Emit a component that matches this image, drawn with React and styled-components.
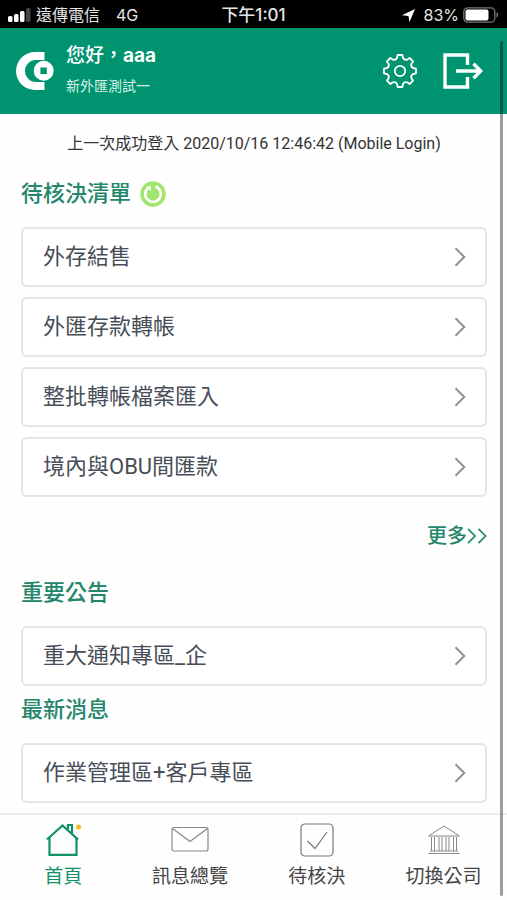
import React, { useState } from "react";
import styled, { createGlobalStyle } from "styled-components";

const approvals = ["外存結售", "外匯存款轉帳", "整批轉帳檔案匯入", "境內與OBU間匯款"];
const notices = ["重大通知專區_企"];
const news = ["作業管理區+客戶專區"];

const tabs = [
  { id: "home", label: "首頁", Icon: HomeIcon },
  { id: "message", label: "訊息總覽", Icon: MailIcon },
  { id: "approve", label: "待核決", Icon: CheckIcon },
  { id: "company", label: "切換公司", Icon: BankIcon },
];

export default function App() {
  // 目前選到的頁籤
  const [tab, setTab] = useState("home");

  return (
    <>
      <GlobalStyle />
      <Page>
        <StatusBar>
          <StatusSide>
            <SignalIcon />
            <Carrier>遠傳電信</Carrier>
            <span>4G</span>
          </StatusSide>
          <Clock>下午1:01</Clock>
          <StatusSide $end>
            <LocationIcon />
            <Percent>83%</Percent>
            <BatteryIcon />
          </StatusSide>
        </StatusBar>

        <Header>
          <LogoIcon />
          <UserInfo>
            <Hello>
              您好，<b>aaa</b>
            </Hello>
            <Company>新外匯測試一</Company>
          </UserInfo>
          <IconButton type="button" aria-label="設定">
            <GearIcon />
          </IconButton>
          <IconButton type="button" aria-label="登出">
            <LogoutIcon />
          </IconButton>
        </Header>

        <Main>
          <LastLogin>上一次成功登入 2020/10/16 12:46:42 (Mobile Login)</LastLogin>

          <TitleRow $top={22}>
            <Title>待核決清單</Title>
            <RefreshButton type="button" aria-label="重新整理">
              <RefreshIcon />
            </RefreshButton>
          </TitleRow>
          <CardList items={approvals} />
          <MoreLink href="#more">
            更多
            <MoreIcon />
          </MoreLink>

          <TitleRow $top={25}>
            <Title>重要公告</Title>
          </TitleRow>
          <CardList items={notices} />

          <TitleRow $top={8}>
            <Title>最新消息</Title>
          </TitleRow>
          <CardList items={news} />
        </Main>

        <TabBar>
          {tabs.map(({ id, label, Icon }) => (
            <TabButton
              key={id}
              type="button"
              $active={tab === id}
              onClick={() => setTab(id)}
            >
              <Icon />
              {label}
            </TabButton>
          ))}
        </TabBar>
        <ScrollThumb />
      </Page>
    </>
  );
}

function CardList({ items }) {
  return (
    <List>
      {items.map((item) => (
        <li key={item}>
          <Card href="#detail">
            {item}
            <ArrowIcon />
          </Card>
        </li>
      ))}
    </List>
  );
}

function SignalIcon() {
  return (
    <svg width="23" height="14" viewBox="0 0 23 14" fill="#fff">
      <rect x="0" y="8" width="4.5" height="6" rx="1.5" />
      <rect x="6" y="6" width="4.5" height="8" rx="1.5" />
      <rect x="12" y="3" width="4.5" height="11" rx="1.5" />
      <rect x="18" y="0" width="4.5" height="14" rx="1.5" fill="#444" />
    </svg>
  );
}

function LocationIcon() {
  return (
    <svg width="13" height="13" viewBox="0 0 13 13" fill="#fff">
      <path d="M13 0 7.5 13 6.5 7 0 6.2Z" />
    </svg>
  );
}

function BatteryIcon() {
  return (
    <svg width="36" height="16" viewBox="0 0 36 16" fill="none">
      <rect x="0.8" y="0.8" width="31" height="14.4" rx="4" stroke="#777" strokeWidth="1.3" />
      <rect x="2.5" y="2.5" width="23" height="11" rx="2" fill="#fff" />
      <path d="M33.5 5.3c2.2.9 2.2 4.5 0 5.4Z" fill="#777" />
    </svg>
  );
}

function LogoIcon() {
  return (
    <svg width="38" height="38" viewBox="0 0 38 38">
      <path
        d="M28.5 0H19a19 19 0 0 0 0 38h9.5V30H20a11 11 0 0 1 0-22h8.5Z"
        fill="#fff"
      />
      <path
        d="M27.7 8.7a10 10 0 1 1 0 20 10 10 0 0 1 0-20ZM24.4 15.5v6.4h6.4v-6.4Z"
        fill="#fff"
        fillRule="evenodd"
      />
    </svg>
  );
}

// 齒輪外框，八個齒每 45 度一個
const gearPath = Array.from({ length: 8 }, (_, i) => {
  const angle = (i * Math.PI) / 4;
  const at = (x, y) => {
    const px = 17 + x * Math.cos(angle) - y * Math.sin(angle);
    const py = 17 + x * Math.sin(angle) + y * Math.cos(angle);
    return `${px.toFixed(2)} ${py.toFixed(2)}`;
  };
  return `${i ? "L" : "M"}${at(-3, -13)}L${at(-2.4, -16)}L${at(2.4, -16)}L${at(3, -13)}Q${at(4.4, -10.6)} ${at(7.1, -11.3)}`;
}).join("");

function GearIcon() {
  return (
    <svg width="34" height="34" viewBox="0 0 34 34" fill="none" stroke="#fff" strokeWidth="1.8" strokeLinejoin="round">
      <path d={`${gearPath}Z`} />
      <circle cx="17" cy="17" r="5.2" />
    </svg>
  );
}

function LogoutIcon() {
  return (
    <svg width="40" height="36" viewBox="0 0 40 36" fill="none" stroke="#fff" strokeWidth="3.4">
      <path d="M24.5 12V2H2v32h22.5V24" />
      <path d="M13 18h24M30.5 10.8l7.2 7.2-7.2 7.2" />
    </svg>
  );
}

function RefreshIcon() {
  return (
    <svg width="26" height="26" viewBox="0 0 26 26" fill="none">
      <circle cx="13" cy="13" r="12.7" fill="#a0e56f" />
      <path d="M15.5 5.6A7.8 7.8 0 1 1 8 7" stroke="#fff" strokeWidth="2.6" />
      <path d="M6 5.2h5v5Z" fill="#fff" />
    </svg>
  );
}

function ArrowIcon() {
  return (
    <svg width="12" height="20" viewBox="0 0 12 20" fill="none" stroke="#909294" strokeWidth="2">
      <path d="M1.5 1.2 10.3 10l-8.8 8.8" />
    </svg>
  );
}

function MoreIcon() {
  return (
    <svg width="20" height="16" viewBox="0 0 20 16" fill="none" stroke="#24866a" strokeWidth="1.7">
      <path d="m1 .8 7 7.2-7 7.2M11.5.8l7 7.2-7 7.2" />
    </svg>
  );
}

function HomeIcon() {
  return (
    <svg width="36" height="34" viewBox="0 0 36 34" fill="none" stroke="#109168" strokeWidth="2.2">
      <path d="M2 16.5 17.5 2.4 33 16.5" />
      <path d="M4.5 14.5v17.3h27V14.5M23 6.5V2h4v8.5" />
      <circle cx="33.5" cy="4" r="2.5" fill="#f5b921" stroke="none" />
    </svg>
  );
}

function MailIcon() {
  return (
    <svg width="38" height="34" viewBox="0 0 38 34" fill="none" stroke="#888" strokeWidth="1.2">
      <rect x="1" y="4.5" width="36" height="23.5" rx="2" />
      <path d="m1.5 5.5 17.5 13 17.5-13" />
    </svg>
  );
}

function CheckIcon() {
  return (
    <svg width="34" height="34" viewBox="0 0 34 34" fill="none" stroke="#777" strokeWidth="1.2">
      <rect x="1" y="1" width="32" height="32" rx="4" />
      <path d="m7.5 18 7.5 7.5L27 9" />
    </svg>
  );
}

function BankIcon() {
  return (
    <svg width="34" height="34" viewBox="0 0 34 34" fill="none" stroke="#888" strokeWidth="1">
      <path d="M1.5 13 17 3l15.5 10ZM3 28h28M1.5 30.5h31" />
      <path d="M4.5 14v14M7.5 14v14M12 14v14M15 14v14M19 14v14M22 14v14M26.5 14v14M29.5 14v14" />
    </svg>
  );
}

const GlobalStyle = createGlobalStyle`
  * {
    box-sizing: border-box;
  }
  body {
    margin: 0;
    background: #fefefe;
    font-family: Roboto, "Noto Sans CJK TC", sans-serif;
  }
  button {
    font-family: inherit;
    border: none;
    background: none;
    padding: 0;
    cursor: pointer;
  }
  a {
    text-decoration: none;
  }
  svg {
    display: block;
    flex: none;
  }
`;

const Page = styled.div`
  position: relative;
  min-height: 100vh;
  display: flex;
  flex-direction: column;
`;

const StatusBar = styled.div`
  height: 28px;
  padding: 2px 8px 0;
  display: grid;
  grid-template-columns: 1fr auto 1fr;
  align-items: center;
  background: #000;
  color: #e4e4e4;
  font-family: Inter, "Noto Sans CJK TC", sans-serif;
  font-size: 16px;
  line-height: 24px;
`;

const StatusSide = styled.div`
  display: flex;
  align-items: center;
  justify-content: ${(props) => (props.$end ? "flex-end" : "flex-start")};
`;

const Carrier = styled.span`
  margin: 0 16px 0 5px;
`;

const Clock = styled.span`
  font-size: 17px;
  font-weight: 500;
`;

const Percent = styled.span`
  margin: 0 4px 0 9px;
`;

const Header = styled.header`
  height: 86px;
  padding: 0 24px 0 16px;
  display: flex;
  align-items: center;
  background: #00936f;
  color: #fff;
`;

const UserInfo = styled.div`
  flex: 1;
  margin: 0 0 4px 12px;
`;

const Hello = styled.div`
  font-size: 19px;
  font-weight: 500;
  line-height: 28px;
  b {
    font-family: Inter, sans-serif;
    font-weight: 700;
  }
`;

const Company = styled.div`
  margin-top: 6px;
  font-size: 14px;
  line-height: 20px;
  color: #d5f0e8;
`;

const IconButton = styled.button`
  margin-left: 26px;
`;

const Main = styled.main`
  flex: 1;
  padding: 18px 20px 10px 21px;
`;

const LastLogin = styled.p`
  margin: 0;
  font-size: 16px;
  line-height: 24px;
  text-align: center;
  color: #333;
`;

const TitleRow = styled.div`
  display: flex;
  align-items: center;
  gap: 9px;
  margin-top: ${(props) => props.$top}px;
`;

const Title = styled.h2`
  margin: 0;
  font-size: 22px;
  font-weight: 500;
  line-height: 32px;
  color: #24866a;
`;

const RefreshButton = styled.button``;

const List = styled.ul`
  margin: 17px 0 0;
  padding: 0;
  display: flex;
  flex-direction: column;
  gap: 10px;
  list-style: none;
`;

const Card = styled.a`
  height: 60px;
  padding: 0 19px 0 20px;
  display: flex;
  align-items: center;
  justify-content: space-between;
  border: 2px solid #e4e5e6;
  border-radius: 6px;
  background: #fff;
  color: #474e57;
  font-size: 22px;
  line-height: 32px;
`;

const MoreLink = styled.a`
  width: fit-content;
  margin: 23px 0 0 auto;
  display: flex;
  align-items: center;
  font-size: 20px;
  font-weight: 500;
  line-height: 32px;
  color: #24866a;
`;

const TabBar = styled.nav`
  position: sticky;
  bottom: 0;
  height: 88px;
  display: grid;
  grid-template-columns: repeat(4, 1fr);
  border-top: 2px solid #eceeef;
  background: #fefefe;
`;

const TabButton = styled.button`
  padding-top: 8px;
  display: flex;
  flex-direction: column;
  align-items: center;
  gap: 6px;
  font-size: 19px;
  line-height: 28px;
  color: ${(props) => (props.$active ? "#109168" : "#444")};
`;

// 捲軸浮在內容右側
const ScrollThumb = styled.div`
  position: absolute;
  top: 41px;
  right: 4px;
  bottom: 5px;
  width: 3px;
  border-radius: 2px;
  background: rgba(0, 0, 0, 0.38);
`;
